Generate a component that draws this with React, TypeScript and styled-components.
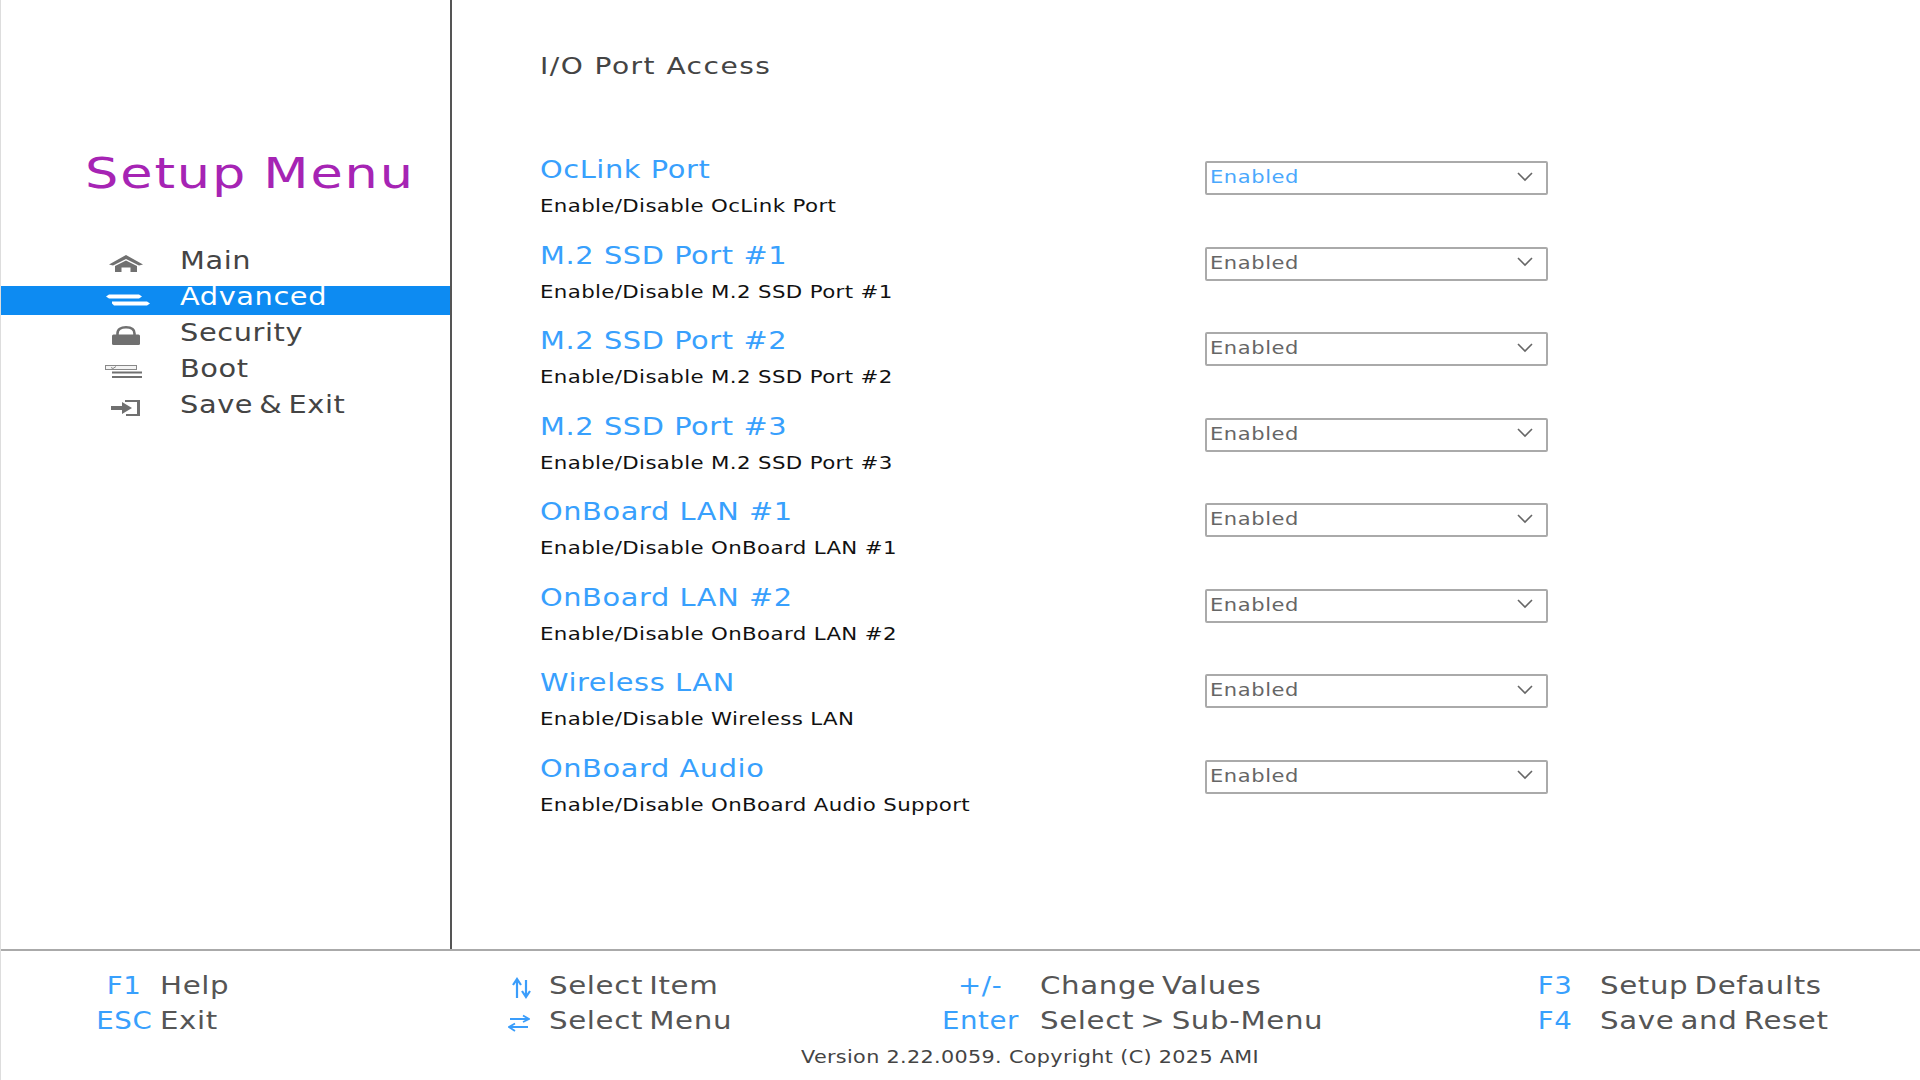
import React from "react";
import styled, { createGlobalStyle, css } from "styled-components";

const GlobalStyle = createGlobalStyle`
  html, body {
    margin: 0;
    padding: 0;
    background: #fff;
  }
  body {
    font-family: "DejaVu Sans", sans-serif;
  }
`;

// the firmware font is a wider cut than DejaVu Sans
const stretch = (x: number, origin = "left") => css`
  display: inline-block;
  transform: scaleX(${x});
  transform-origin: ${origin} center;
`;

const HomeIcon = () => (
  <svg width="34" height="17" viewBox="0 0 34 17">
    <path d="M0 9.5 L17 0 L34 9.5 L30 10.5 L17 4 L4 10.5 Z" fill="#707070" />
    <path d="M6 11 L17 5.5 L28 11 V17 H21.5 V12.5 H12.5 V17 H6 Z" fill="#707070" />
  </svg>
);
const AdvancedIcon = () => (
  <svg width="47" height="12" viewBox="-3 0 47 12">
    <path d="M0 2.5 L3 0.5 H33 L36 2.5 L33 4.5 H3 Z" fill="#fff" />
    <path d="M6 7.5 H41 L44 9.5 L41 11.5 H8 L6 9.5 Z" fill="#fff" />
  </svg>
);
const LockIcon = () => (
  <svg width="30" height="19" viewBox="0 0 30 19">
    <path d="M6.5 10 V7.5 C6.5 3 10 1.3 15 1.3 C20 1.3 23.5 3 23.5 7.5 V10" fill="none" stroke="#707070" strokeWidth="2.6" />
    <rect x="1" y="8.5" width="28" height="10.5" rx="1.5" fill="#707070" />
  </svg>
);
const BootIcon = () => (
  <svg width="42" height="14" viewBox="0 0 42 14">
    <rect x="0.5" y="0.5" width="31" height="4" fill="#f4f4f4" stroke="#888" />
    <path d="M6 2.5 L8 3.5 L11 1.5" fill="none" stroke="#888" />
    <path d="M7 7.5 H37 M7 12 H37" stroke="#707070" strokeWidth="2" />
  </svg>
);
const ExitIcon = () => (
  <svg width="30" height="19" viewBox="0 -1 30 19">
    <path d="M14 1 H29 V17 H15 V15 H26 V3 H14 Z" fill="#707070" />
    <path d="M0 7 H11 V3 L21 9 L11 15 V11 H0 Z" fill="#707070" />
  </svg>
);
const UpDownIcon = () => (
  <KeyIcon width="22" height="22" viewBox="0 0 22 22">
    <path d="M6 21 V3 M2 8 L6 2 L10 8" fill="none" stroke="#3a9dfb" strokeWidth="2.2" />
    <path d="M15 3 V20 M11 14 L15 20 L19 14" fill="none" stroke="#3a9dfb" strokeWidth="2.2" />
  </KeyIcon>
);
const LeftRightIcon = () => (
  <KeyIcon shift={6} width="22" height="18" viewBox="0 0 22 18">
    <path d="M2 5 H20 M15 1.5 L21 5 L15 8" fill="none" stroke="#3a9dfb" strokeWidth="1.8" />
    <path d="M20 13 H2 M7 9.5 L1 13 L7 17" fill="none" stroke="#3a9dfb" strokeWidth="1.8" />
  </KeyIcon>
);
const Chevron = () => (
  <svg width="16" height="10" viewBox="0 0 16 10">
    <path d="M1 1 L8 8 L15 1" fill="none" stroke="#666" strokeWidth="1.6" />
  </svg>
);

const menus = [
  { label: "Main", icon: <HomeIcon /> },
  { label: "Advanced", icon: <AdvancedIcon />, active: true },
  { label: "Security", icon: <LockIcon /> },
  { label: "Boot", icon: <BootIcon /> },
  { label: "Save & Exit", icon: <ExitIcon /> },
];

const ports = [
  { name: "OcLink Port", desc: "Enable/Disable OcLink Port" },
  { name: "M.2 SSD Port #1", desc: "Enable/Disable M.2 SSD Port #1" },
  { name: "M.2 SSD Port #2", desc: "Enable/Disable M.2 SSD Port #2" },
  { name: "M.2 SSD Port #3", desc: "Enable/Disable M.2 SSD Port #3" },
  { name: "OnBoard LAN #1", desc: "Enable/Disable OnBoard LAN #1" },
  { name: "OnBoard LAN #2", desc: "Enable/Disable OnBoard LAN #2" },
  { name: "Wireless LAN", desc: "Enable/Disable Wireless LAN" },
  { name: "OnBoard Audio", desc: "Enable/Disable OnBoard Audio Support" },
];

export default function App() {
  return (
    <Wrap>
      <GlobalStyle />
      <Top>
        <Sider>
          <MenuTitle>Setup Menu</MenuTitle>
          <MenuList>
            {menus.map(m => (
              <MenuRow key={m.label} active={m.active}>
                <MenuIcon>{m.icon}</MenuIcon>
                <MenuLabel>{m.label}</MenuLabel>
              </MenuRow>
            ))}
          </MenuList>
        </Sider>
        <Content>
          <PageTitle>I/O Port Access</PageTitle>
          <PortList>
            {ports.map((p, i) => (
              <PortRow key={p.name}>
                <div>
                  <PortName>{p.name}</PortName>
                  <PortDesc>{p.desc}</PortDesc>
                </div>
                <Select focused={i === 0}>
                  <SelectValue>Enabled</SelectValue>
                  <Chevron />
                </Select>
              </PortRow>
            ))}
          </PortList>
        </Content>
      </Top>
      <Footer>
        <KeyGrid>
          <KeyGroup keyWidth={58} gap={7}>
            <Key><KeyName>F1</KeyName></Key>
            <KeyText>Help</KeyText>
            <Key><KeyName>ESC</KeyName></Key>
            <KeyText>Exit</KeyText>
          </KeyGroup>
          <KeyGroup keyWidth={34} gap={10}>
            <Key><UpDownIcon /></Key>
            <KeyText>Select Item</KeyText>
            <Key><LeftRightIcon /></Key>
            <KeyText>Select Menu</KeyText>
          </KeyGroup>
          <KeyGroup keyWidth={80} gap={20}>
            <Key><KeyName>+/-</KeyName></Key>
            <KeyText>Change Values</KeyText>
            <Key><KeyName>Enter</KeyName></Key>
            <KeyText>Select &gt; Sub-Menu</KeyText>
          </KeyGroup>
          <KeyGroup keyWidth={50} gap={20}>
            <Key><KeyName>F3</KeyName></Key>
            <KeyText>Setup Defaults</KeyText>
            <Key><KeyName>F4</KeyName></Key>
            <KeyText>Save and Reset</KeyText>
          </KeyGroup>
        </KeyGrid>
        <Version>Version 2.22.0059. Copyright (C) 2025 AMI</Version>
      </Footer>
    </Wrap>
  );
}

const Wrap = styled.div`
  width: 1920px;
  height: 1080px;
  display: flex;
  flex-direction: column;
  background: #fff;
  border-left: 1px solid #ddd;
  box-sizing: border-box;
  overflow: hidden;
`;
const Top = styled.div`
  display: flex;
  height: 949px;
`;
const Sider = styled.div`
  flex: none;
  width: 451px;
  box-sizing: border-box;
  border-right: 2px solid #555;
  padding-top: 146px;
`;
const MenuTitle = styled.div`
  padding-left: 84px;
  font-size: 42px;
  line-height: 56px;
  letter-spacing: 1.5px;
  word-spacing: -2px;
  color: #a624b4;
  transform: scaleX(1.25);
  transform-origin: 84px center;
`;
const MenuList = styled.div`
  margin-top: 41px;
`;
const MenuRow = styled.div<{ active?: boolean }>`
  display: flex;
  height: 36px;
  padding-left: 100px;
  color: ${p => (p.active ? "#fff" : "#444")};
  background: ${p =>
    p.active ? "linear-gradient(#0d8bf2, #0d8bf2) 0 7px / 100% 29px no-repeat" : "none"};
`;
const MenuIcon = styled.span`
  flex: none;
  width: 50px;
  height: 36px;
  padding-top: 5px;
  box-sizing: border-box;
  display: flex;
  align-items: center;
  justify-content: center;
`;
const MenuLabel = styled.span`
  margin-left: 29px;
  font-size: 24px;
  line-height: 36px;
  letter-spacing: 0.5px;
  word-spacing: -3px;
  ${stretch(1.2)}
`;
const Content = styled.div`
  flex: 1;
  padding: 50px 0 0 88px;
`;
const PageTitle = styled.div`
  font-size: 23px;
  line-height: 33px;
  letter-spacing: 1.2px;
  color: #444;
  ${stretch(1.22)}
`;
const PortList = styled.div`
  margin-top: 70px;
`;
const PortRow = styled.div`
  display: flex;
  justify-content: space-between;
  align-items: flex-start;
  width: 1008px;
  height: 85.5px;
`;
const PortName = styled.div`
  font-size: 24px;
  line-height: 35px;
  letter-spacing: 0.5px;
  color: #38a0fd;
  ${stretch(1.2)}
`;
const PortDesc = styled.div`
  margin-top: 5px;
  font-size: 18px;
  line-height: 25px;
  letter-spacing: 0.3px;
  color: #111;
  transform: scaleX(1.185);
  transform-origin: left center;
`;
const Select = styled.div<{ focused?: boolean }>`
  box-sizing: border-box;
  width: 343px;
  height: 34px;
  margin-top: 8px;
  padding: 0 13px 3px 3px;
  display: flex;
  align-items: center;
  justify-content: space-between;
  border: 2px solid #aaa;
  border-radius: 2px;
  font-size: 18px;
  letter-spacing: 0.5px;
  color: ${p => (p.focused ? "#4aa8fd" : "#666")};
`;
const SelectValue = styled.span`
  ${stretch(1.168)}
`;
const Footer = styled.div`
  flex: none;
  height: 131px;
  border-top: 2px solid #aaa;
  box-sizing: border-box;
  padding: 18px 0 0 94px;
`;
const KeyGrid = styled.div`
  display: grid;
  grid-template-columns: 410px 435px 590px 1fr;
`;
const KeyGroup = styled.div<{ keyWidth: number; gap: number }>`
  display: grid;
  grid-template-columns: ${p => p.keyWidth}px 1fr;
  column-gap: ${p => p.gap}px;
  grid-auto-rows: 35px;
  font-size: 24px;
  line-height: 35px;
  letter-spacing: 0.5px;
`;
const Key = styled.span`
  display: flex;
  align-items: center;
  justify-content: center;
  color: #38a0fd;
`;
const KeyName = styled.span`
  ${stretch(1.15, "center")}
`;
const KeyIcon = styled.svg<{ shift?: number }>`
  margin-top: 3px;
  margin-right: ${p => p.shift || 0}px;
`;
const KeyText = styled.span`
  color: #555;
  justify-self: start;
  word-spacing: -3px;
  ${stretch(1.22)}
`;
const Version = styled.div`
  margin-top: 5px;
  padding-left: 706px;
  font-size: 18px;
  line-height: 25px;
  letter-spacing: 0.3px;
  color: #444;
  transform: scaleX(1.151);
  transform-origin: 706px center;
`;
